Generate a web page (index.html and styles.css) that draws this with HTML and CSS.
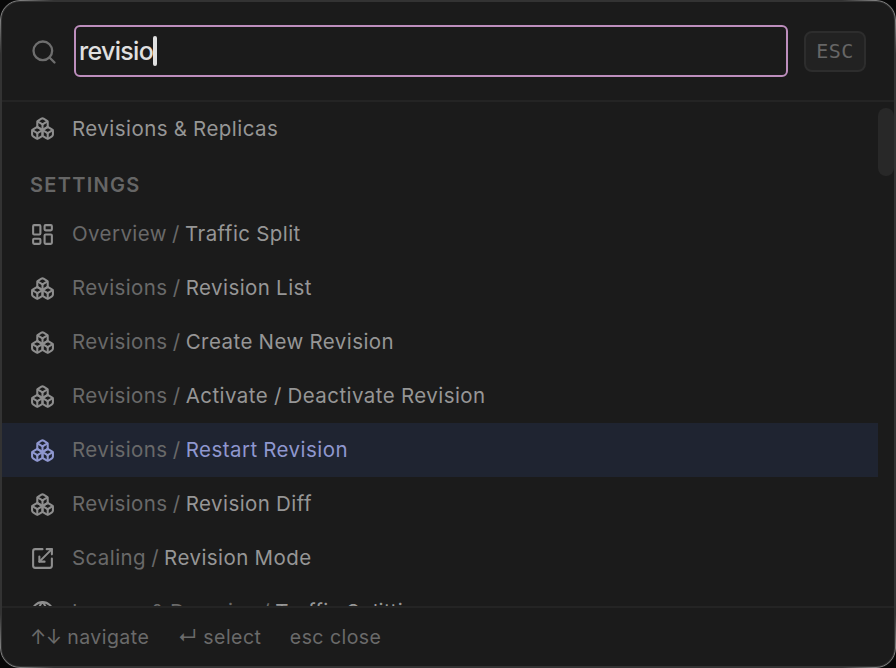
FILE: index.html
```html
<!DOCTYPE html>
<html lang="en">
<head>
    <meta charset="UTF-8">
    <meta name="viewport" content="width=device-width, initial-scale=1.0">
    <title>Command Palette</title>
    <link rel="stylesheet" href="styles.css">
</head>
<body>
    <svg class="icon-defs" aria-hidden="true">
        <symbol id="icon-boxes" viewBox="0 0 24 24">
            <path d="M2.97 12.92A2 2 0 0 0 2 14.63v3.24a2 2 0 0 0 .97 1.71l3 1.8a2 2 0 0 0 2.06 0L12 19v-5.5l-5-3-4.03 2.42Z"/>
            <path d="m7 16.5-4.74-2.85"/>
            <path d="m7 16.5 5-3"/>
            <path d="M7 16.5v5.17"/>
            <path d="M12 13.5V19l3.97 2.38a2 2 0 0 0 2.06 0l3-1.8a2 2 0 0 0 .97-1.71v-3.24a2 2 0 0 0-.97-1.71L17 10.5l-5 3Z"/>
            <path d="m17 16.5-5-3"/>
            <path d="m17 16.5 4.74-2.85"/>
            <path d="M17 16.5v5.17"/>
            <path d="M7.97 4.42A2 2 0 0 0 7 6.13v4.37l5 3 5-3V6.13a2 2 0 0 0-.97-1.71l-3-1.8a2 2 0 0 0-2.06 0l-3 1.8Z"/>
            <path d="M12 8 7.26 5.15"/>
            <path d="m12 8 4.74-2.85"/>
            <path d="M12 13.5V8"/>
        </symbol>
        <symbol id="icon-dashboard" viewBox="0 0 24 24">
            <rect width="7" height="9" x="3" y="3" rx="1"/>
            <rect width="7" height="5" x="14" y="3" rx="1"/>
            <rect width="7" height="9" x="14" y="12" rx="1"/>
            <rect width="7" height="5" x="3" y="16" rx="1"/>
        </symbol>
        <symbol id="icon-scaling" viewBox="0 0 24 24">
            <path d="M12 3H5a2 2 0 0 0-2 2v14a2 2 0 0 0 2 2h14a2 2 0 0 0 2-2v-7"/>
            <path d="M14 15H9v-5"/>
            <path d="M16 3h5v5"/>
            <path d="M21 3 9 15"/>
        </symbol>
        <symbol id="icon-globe" viewBox="0 0 24 24">
            <circle cx="12" cy="12" r="10"/>
            <path d="M12 2a14.5 14.5 0 0 0 0 20 14.5 14.5 0 0 0 0-20"/>
            <path d="M2 12h20"/>
        </symbol>
        <symbol id="icon-search" viewBox="0 0 24 24">
            <circle cx="11" cy="11" r="8"/>
            <path d="m21 21-4.3-4.3"/>
        </symbol>
    </svg>

    <div class="palette">
        <header class="search-bar">
            <svg class="search-icon"><use href="#icon-search"/></svg>
            <div class="search-input" role="textbox" tabindex="0">revisio<span class="caret"></span></div>
            <kbd class="esc-key">ESC</kbd>
        </header>

        <main class="results">
            <ul class="result-list">
                <li class="result first"><svg class="icon"><use href="#icon-boxes"/></svg><span class="name">Revisions &amp; Replicas</span></li>
            </ul>
            <h2 class="group-title">Settings</h2>
            <ul class="result-list">
                <li class="result"><svg class="icon"><use href="#icon-dashboard"/></svg><span class="name"><span class="parent">Overview / </span>Traffic Split</span></li>
                <li class="result"><svg class="icon"><use href="#icon-boxes"/></svg><span class="name"><span class="parent">Revisions / </span>Revision List</span></li>
                <li class="result"><svg class="icon"><use href="#icon-boxes"/></svg><span class="name"><span class="parent">Revisions / </span>Create New Revision</span></li>
                <li class="result"><svg class="icon"><use href="#icon-boxes"/></svg><span class="name"><span class="parent">Revisions / </span>Activate / Deactivate Revision</span></li>
                <li class="result active"><svg class="icon"><use href="#icon-boxes"/></svg><span class="name"><span class="parent">Revisions / </span>Restart Revision</span></li>
                <li class="result"><svg class="icon"><use href="#icon-boxes"/></svg><span class="name"><span class="parent">Revisions / </span>Revision Diff</span></li>
                <li class="result"><svg class="icon"><use href="#icon-scaling"/></svg><span class="name"><span class="parent">Scaling / </span>Revision Mode</span></li>
                <li class="result"><svg class="icon"><use href="#icon-globe"/></svg><span class="name"><span class="parent">Ingress &amp; Domains / </span>Traffic Splitting</span></li>
            </ul>
            <div class="scroll-thumb"></div>
        </main>

        <footer class="hints">
            <span><span class="arrows">↑↓</span> navigate</span>
            <span>↵ select</span>
            <span>esc close</span>
        </footer>
    </div>
</body>
</html>
```
FILE: styles.css
```css
* {
    box-sizing: border-box;
}

body {
    margin: 0;
    background-color: #080808;
    font-family: Inter, sans-serif;
    color: #969696;
}

.icon-defs {
    display: none;
}

/* Palette window */
.palette {
    display: flex;
    flex-direction: column;
    position: relative;
    width: 896px;
    height: 668px;
    border: 2px solid #333;
    border-radius: 20px;
    background-color: #1b1b1b;
}

/* Light rim that fades out away from the corners */
.palette::before {
    content: "";
    position: absolute;
    inset: -2px;
    border: 1px solid #808080;
    border-radius: 20px;
    pointer-events: none;
    mask-image:
        radial-gradient(circle at 0 0, #000 20px, transparent 54px),
        radial-gradient(circle at 100% 0, #000 20px, transparent 54px),
        radial-gradient(circle at 0 100%, #000 20px, transparent 54px),
        radial-gradient(circle at 100% 100%, #000 20px, transparent 54px);
}

/* Search bar */
.search-bar {
    display: flex;
    align-items: center;
    height: 100px;
    padding: 0 28px;
    border-bottom: 2px solid #242424;
    flex-shrink: 0;
}

.search-icon,
.icon {
    fill: none;
    stroke: currentColor;
    stroke-width: 2;
    stroke-linecap: round;
    stroke-linejoin: round;
    flex-shrink: 0;
}

.search-icon {
    width: 28px;
    height: 28px;
    margin-top: 2px;
    color: #6e6e6e;
}

.search-input {
    display: flex;
    align-items: center;
    flex: 1;
    height: 52px;
    margin: 0 16px;
    padding: 0 3px;
    border: 2px solid #bd8ebd;
    border-radius: 6px;
    font-size: 25px;
    font-weight: 500;
    letter-spacing: -0.7px;
    color: #e0e0e0;
    outline: none;
}

.caret {
    width: 4px;
    height: 30px;
    border-radius: 2px;
    background-color: #e0e0e0;
}

.esc-key {
    width: 62px;
    height: 41px;
    border: 2px solid #2d2d2d;
    border-radius: 8px;
    background-color: #222;
    font-family: "DejaVu Sans Mono", monospace;
    font-size: 20px;
    letter-spacing: 0.4px;
    line-height: 37px;
    text-align: center;
    color: #666;
}

/* Results */
.results {
    position: relative;
    flex: 1;
    min-height: 0;
    overflow: hidden;
}

.result-list {
    margin: 0;
    padding: 0 16px 0 0;
    list-style: none;
}

.result {
    display: flex;
    align-items: center;
    gap: 17px;
    height: 54px;
    padding: 0 28px;
    font-size: 20.5px;
    letter-spacing: 0.45px;
    word-spacing: -0.5px;
    white-space: nowrap;
}

.first {
    height: 52px;
}

.icon {
    width: 25px;
    height: 25px;
    color: #8e8e8e;
}

.name {
    padding-bottom: 1px;
}

.first .name {
    padding: 1px 0 0;
}

.parent {
    letter-spacing: 0.4px;
    word-spacing: -1px;
    color: #696969;
}

.active {
    background-color: #1f2431;
}

.active,
.active .icon {
    color: #8f97cf;
}

.group-title {
    height: 53px;
    margin: 0;
    padding-left: 28px;
    font-size: 20px;
    font-weight: 600;
    letter-spacing: 1.3px;
    line-height: 63px;
    text-transform: uppercase;
    color: #666;
}

.scroll-thumb {
    position: absolute;
    top: 6px;
    right: 0;
    width: 16px;
    height: 68px;
    border-radius: 8px;
    background-color: #282828;
}

/* Keyboard hints */
.hints {
    display: flex;
    align-items: center;
    gap: 28.5px;
    height: 60px;
    padding: 0 28px;
    border-top: 2px solid #242424;
    font-size: 19.5px;
    letter-spacing: 0.45px;
    color: #6a6a6a;
    flex-shrink: 0;
}

.arrows {
    letter-spacing: -0.6px;
}
```
